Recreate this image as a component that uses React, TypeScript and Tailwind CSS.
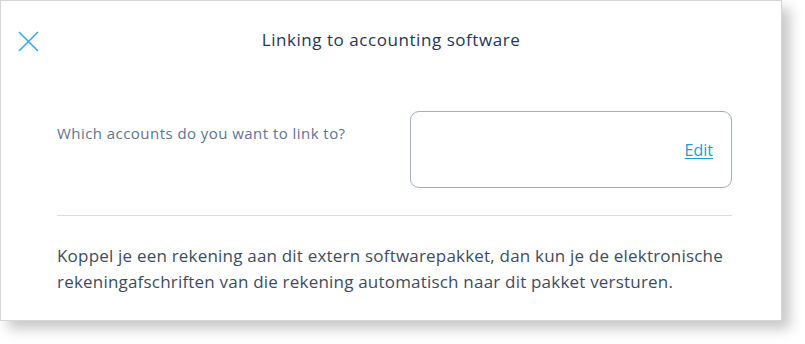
import React from "react";

export default function App() {
  return (
    <div className="w-[805px] h-[344px] bg-white" style={{ fontFamily: '"Open Sans", "Liberation Sans", sans-serif' }}>
      <div className="w-[782px] h-[321px] bg-white border border-[#d6d6d6] shadow-[8px_8px_12px_rgba(0,0,0,0.22)] flex flex-col">
        <div className="relative h-[82px] flex items-start justify-center pt-[27px]">
          <button className="absolute left-[17px] top-[30px] w-[21px] h-[21px]">
            <svg width="21" height="21" viewBox="0 0 21 21" fill="none" stroke="#3aa9e3" strokeWidth="1.6">
              <path d="M1 1 L20 20 M20 1 L1 20" />
            </svg>
          </button>
          <h1 className="text-[17px] leading-[24px] text-[#1f3658] font-medium tracking-[0.55px]">Linking to accounting software</h1>
        </div>
        <div className="flex pl-[56px] pr-[49px] pt-[28px]">
          <div className="flex-1 text-[15px] text-[#627390] leading-[20px] pt-[12px] tracking-[0.45px]">Which accounts do you want to link to?</div>
          <div className="w-[322px] h-[77px] border border-[#a3aec0] rounded-[9px] flex items-center justify-end pr-[18px]">
            <a href="#" className="text-[16px] text-[#1e9ad6] underline underline-offset-2">Edit</a>
          </div>
        </div>
        <div className="ml-[56px] mr-[49px] mt-[27px] h-px bg-[#d8dde4]" />
        <p className="pl-[56px] pr-[40px] pt-[27px] text-[17px] leading-[26px] text-[#3e4c60] tracking-[0.2px]">
          Koppel je een rekening aan dit extern softwarepakket, dan kun je de elektronische rekeningafschriften van die rekening automatisch naar dit pakket versturen.
        </p>
      </div>
    </div>
  );
}
